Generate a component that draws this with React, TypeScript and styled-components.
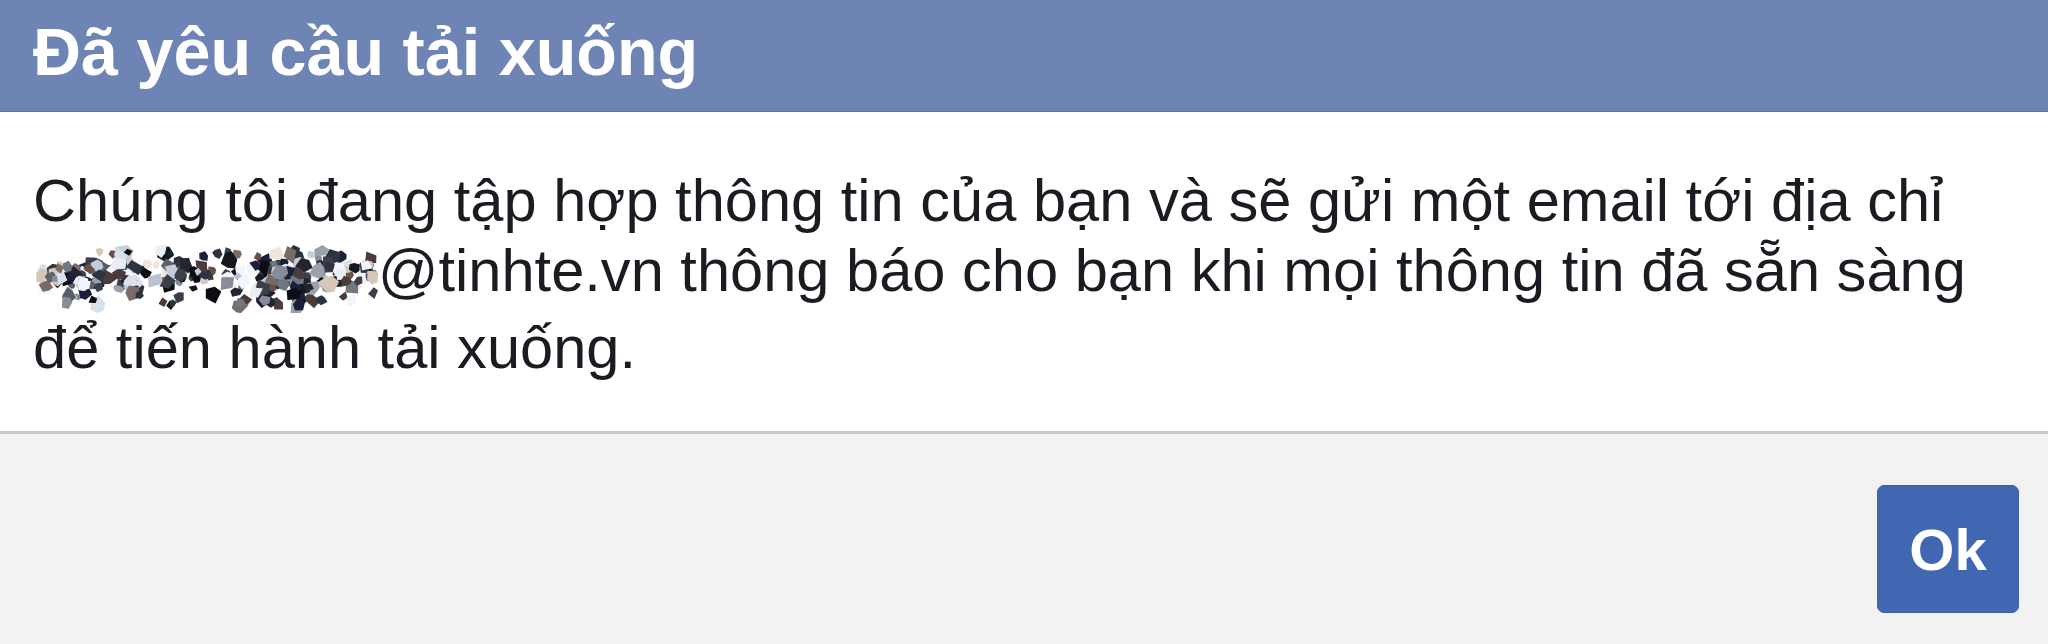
import styled, { createGlobalStyle } from "styled-components";

const GlobalStyle = createGlobalStyle`
  html, body {
    margin: 0;
    padding: 0;
    background: #ffffff;
  }
  body {
    font-family: "Liberation Sans", Arial, Helvetica, sans-serif;
    -webkit-font-smoothing: antialiased;
  }
`;

// seeded random so the mosaic looks the same on every render
function mulberry32(seed: number) {
  return function () {
    let t = (seed += 0x6d2b79f5);
    t = Math.imul(t ^ (t >>> 15), t | 1);
    t ^= t + Math.imul(t ^ (t >>> 7), t | 61);
    return ((t ^ (t >>> 14)) >>> 0) / 4294967296;
  };
}

const darkColors = ["#0b0d12", "#15171e", "#22252d", "#2e3340", "#1a1f3a", "#3b3f47", "#4a3c3a"];
const midColors = ["#5d626b", "#6f7780", "#868d96", "#9aa1aa", "#6b5048", "#7b6b66", "#56606b"];
const lightColors = ["#c5ced8", "#d9e2ea", "#e8eef4", "#efe5d8", "#d6c8b6", "#f3f6f9", "#b9c3cf"];

type Cell = { points: string; fill: string };

function buildMosaic(width: number, height: number): Cell[] {
  const rand = mulberry32(97);
  const cells: Cell[] = [];
  const count = 250;
  for (let i = 0; i < count; i++) {
    const cx = 3 + rand() * (width - 6);
    // most of the cells sit in the x-height band, a few in ascenders / descenders
    const r = rand();
    let cy: number;
    if (r < 0.7) cy = 18 + rand() * 26;
    else if (r < 0.86) cy = 5 + rand() * 14;
    else cy = 46 + rand() * 16;
    const size = 4 + rand() * 5.5;
    const sides = 4 + Math.floor(rand() * 3);
    const rot = rand() * Math.PI * 2;
    const pts: string[] = [];
    for (let s = 0; s < sides; s++) {
      const a = rot + (s / sides) * Math.PI * 2 + (rand() - 0.5) * 0.6;
      const rr = size * (0.7 + rand() * 0.5);
      const px = Math.min(width, Math.max(0, cx + Math.cos(a) * rr));
      const py = Math.min(height, Math.max(0, cy + Math.sin(a) * rr));
      pts.push(`${px.toFixed(1)},${py.toFixed(1)}`);
    }
    const c = rand();
    const palette = c < 0.42 ? darkColors : c < 0.66 ? midColors : lightColors;
    cells.push({
      points: pts.join(" "),
      fill: palette[Math.floor(rand() * palette.length)],
    });
  }
  return cells;
}

const MOSAIC_W = 342;
const MOSAIC_H = 68;
const mosaicCells = buildMosaic(MOSAIC_W, MOSAIC_H);

function RedactedName() {
  return (
    <Mosaic width={MOSAIC_W} height={MOSAIC_H} viewBox={`0 0 ${MOSAIC_W} ${MOSAIC_H}`} aria-hidden>
      {mosaicCells.map((cell, i) => (
        <polygon key={i} points={cell.points} fill={cell.fill} />
      ))}
    </Mosaic>
  );
}

function App() {
  return (
    <>
      <GlobalStyle />
      <Dialog>
        <Header>
          <Title>Đã yêu cầu tải xuống</Title>
        </Header>
        <Body>
          <Message>
            Chúng tôi đang tập hợp thông tin của bạn và sẽ gửi một email tới địa chỉ{" "}
            <RedactedName />
            @tinhte.vn thông báo cho bạn khi mọi thông tin đã sẵn sàng để tiến hành tải xuống.
          </Message>
        </Body>
        <Footer>
          <OkButton type="button">Ok</OkButton>
        </Footer>
      </Dialog>
    </>
  );
}

const Dialog = styled.div`
  display: flex;
  flex-direction: column;
  min-height: 100vh;
  box-sizing: border-box;
  background: #ffffff;
`;

const Header = styled.div`
  box-sizing: border-box;
  height: 112px;
  padding: 16px 33px 0;
  background: #6d84b4;
  border-bottom: 1px solid #5d74a6;
`;

const Title = styled.h1`
  margin: 0;
  color: #ffffff;
  font-family: "Liberation Sans", Arial, Helvetica, sans-serif;
  font-size: 66.5px;
  font-weight: 700;
  line-height: 72px;
`;

const Body = styled.div`
  padding: 54px 33px 48px;
  border-bottom: 3px solid #cbcbcb;
`;

const Message = styled.p`
  margin: 0;
  color: #1a1c22;
  font-size: 59.6px;
  line-height: 70px;
`;

const Mosaic = styled.svg`
  display: inline-block;
  margin-left: 3px;
  vertical-align: -22px;
`;

const Footer = styled.div`
  flex: 1;
  display: flex;
  justify-content: flex-end;
  align-items: flex-start;
  padding: 51px 29px 0;
  background: #f2f2f2;
`;

const OkButton = styled.button`
  width: 142px;
  height: 128px;
  padding: 0;
  border: 1px solid #3e63ad;
  border-radius: 7px;
  background: #4267b2;
  color: #ffffff;
  font-family: "Liberation Sans", Arial, Helvetica, sans-serif;
  font-size: 58px;
  font-weight: 700;
  cursor: pointer;
`;

export default App;
